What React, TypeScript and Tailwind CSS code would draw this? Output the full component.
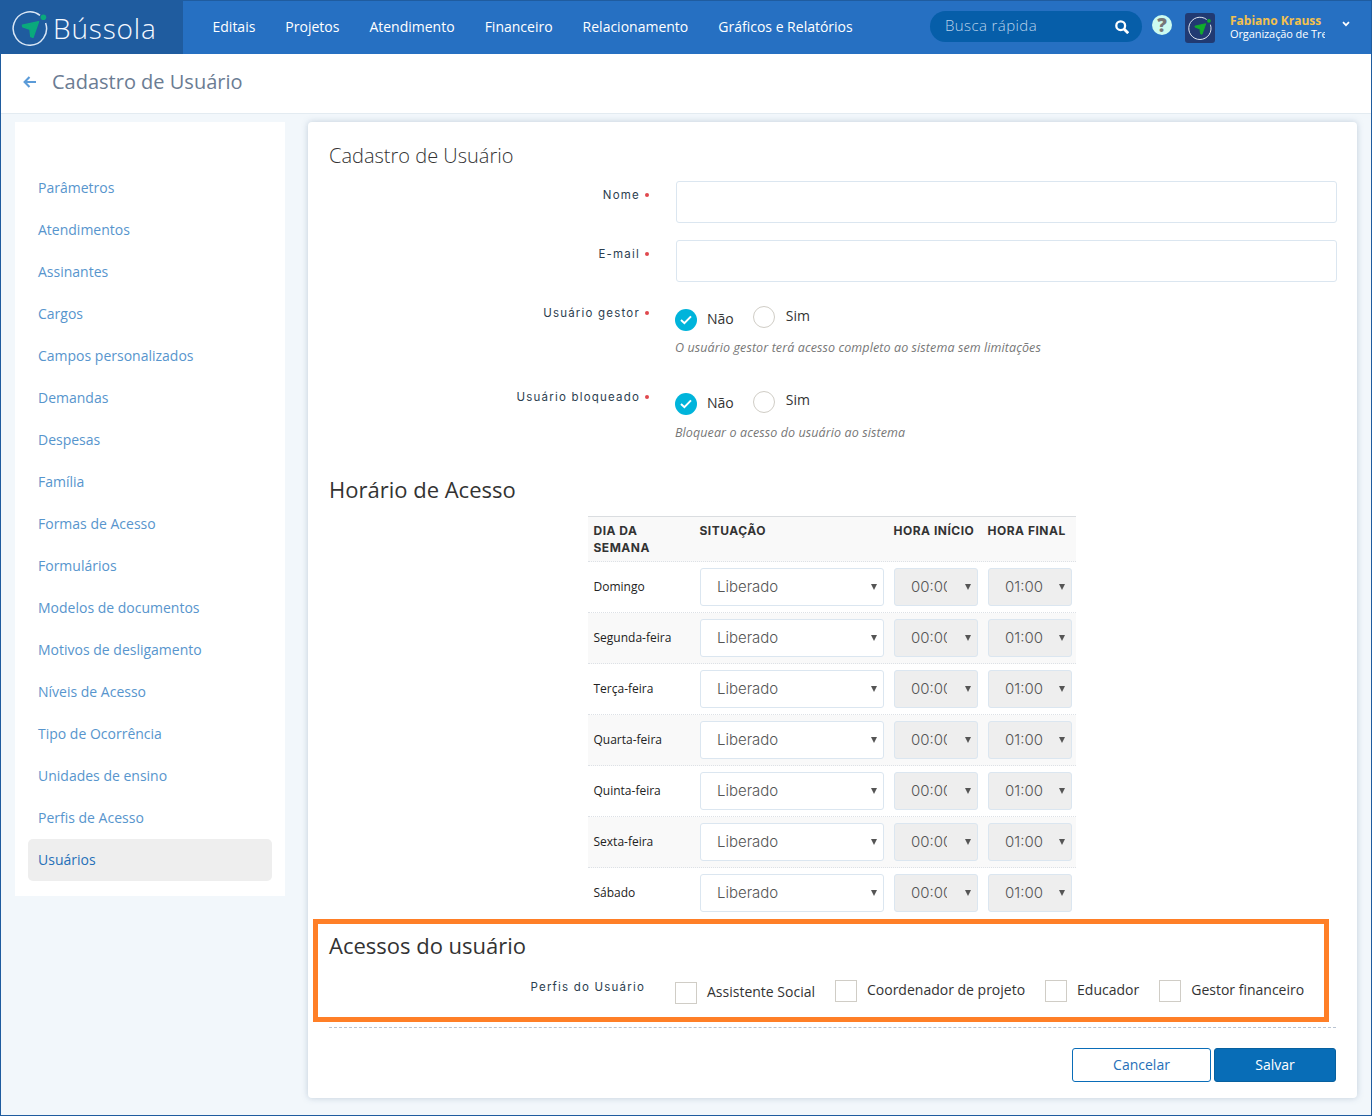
import React, { useState } from 'react';

const navItems = ['Editais', 'Projetos', 'Atendimento', 'Financeiro', 'Relacionamento', 'Gráficos e Relatórios'];

const menuItems = [
  'Parâmetros',
  'Atendimentos',
  'Assinantes',
  'Cargos',
  'Campos personalizados',
  'Demandas',
  'Despesas',
  'Família',
  'Formas de Acesso',
  'Formulários',
  'Modelos de documentos',
  'Motivos de desligamento',
  'Níveis de Acesso',
  'Tipo de Ocorrência',
  'Unidades de ensino',
  'Perfis de Acesso',
  'Usuários',
];

const days = ['Domingo', 'Segunda-feira', 'Terça-feira', 'Quarta-feira', 'Quinta-feira', 'Sexta-feira', 'Sábado'];

const CompassLogo: React.FC<{ className: string; arrow: string; ring: string }> = ({ className, arrow, ring }) => (
  <svg viewBox="0 0 36 36" className={className} fill="none">
    <path d="M28 5.3A16.7 16.7 0 1 0 33.6 13" stroke={ring} strokeWidth="1.5" />
    <circle cx="31.4" cy="7.2" r="2.8" fill={arrow} />
    <path d="M10.4 15.2 26.6 11.6 21 27.4 18.8 26.6 18 19.4 10.8 16.8Z" fill={arrow} stroke={arrow} strokeWidth="1.4" strokeLinejoin="round" />
  </svg>
);

const Header: React.FC = () => (
  <header className="flex h-[53px] bg-[#2670c2]">
    <div className="flex w-[182px] shrink-0 items-center bg-[#1f5c9f] pl-[11px]">
      <CompassLogo className="h-9 w-9 shrink-0" arrow="#0aaa7c" ring="#d9e6f5" />
      <span className="ml-[5px] text-[28px] leading-none font-light tracking-[0.85px] text-[#f3f8ff]">Bússola</span>
    </div>
    <nav className="flex items-center gap-[30px] pb-[2px] pl-[29.5px] text-[14px] text-white">
      {navItems.map((item) => (
        <a key={item} href="#" className="whitespace-nowrap">{item}</a>
      ))}
    </nav>
    <div className="ml-auto flex pr-[21px]">
      <div className="mt-[10px] flex h-[31px] w-[212px] items-center justify-between rounded-full bg-[#065ea9] pr-[13px] pl-[15px]">
        <span className="pb-[2px] text-[15px] font-light tracking-[0.4px] text-[#b9d2ea]">Busca rápida</span>
        <svg viewBox="0 0 14 14" className="h-[14px] w-[14px]" fill="none" stroke="white" strokeWidth="2.3">
          <circle cx="5.7" cy="5.7" r="4.4" />
          <path d="m9 9 4.2 4.2" strokeWidth="2.8" />
        </svg>
      </div>
      <div className="mt-[14px] ml-[10px] flex h-5 w-5 items-center justify-center rounded-full bg-[#ccfbf0] text-[19px] leading-none font-extrabold text-[#777]">?</div>
      <div className="mt-3 ml-[13px] flex h-[30px] w-[30px] items-center justify-center rounded-[3px] bg-[#213a72]">
        <CompassLogo className="h-6 w-6" arrow="#10ad2c" ring="#dde5f0" />
      </div>
      <div className="mt-3 ml-[15px] w-[95px] whitespace-nowrap">
        <div className="text-[12px] leading-[16px] font-bold text-[#f2c14e]">Fabiano Krauss</div>
        <div className="-mt-[3px] overflow-hidden text-[11px] leading-[15px] font-medium tracking-[-0.1px] text-white">Organização de Treinamento</div>
      </div>
      <svg viewBox="0 0 8 6" className="mt-5 ml-[17px] h-[6px] w-2" fill="none" stroke="white" strokeWidth="1.7">
        <path d="m1 1.2 3 3 3-3" />
      </svg>
    </div>
  </header>
);

const FormLabel: React.FC<{ text: string; required?: boolean }> = ({ text, required }) => (
  <div className="flex w-[322px] shrink-0 items-center justify-end self-start font-['Inter'] text-[11.5px] leading-[16px] tracking-[1.2px] text-[#2c3e50]">
    {text}
    {required ? <span className="mr-[2px] ml-[5px] h-1 w-1 rounded-full bg-[#e0484d]" /> : <span className="w-[6px]" />}
  </div>
);

const YesNo: React.FC<{ name: string; className?: string }> = ({ name, className = '' }) => {
  const [yes, setYes] = useState(false);

  const mark = (checked: boolean) =>
    checked ? (
      <span className="flex h-[22px] w-[22px] items-center justify-center rounded-full bg-[#00b4db]">
        <svg viewBox="0 0 12 10" className="h-[10px] w-3" fill="none" stroke="white" strokeWidth="2">
          <path d="m1 5 3.4 3.2L11 1.4" />
        </svg>
      </span>
    ) : (
      <span className="h-[22px] w-[22px] rounded-full border border-[#d0cdc6] bg-white" />
    );

  return (
    <div className={`flex text-[14px] leading-5 text-[#333] ${className}`} role="radiogroup" aria-label={name}>
      <button type="button" onClick={() => setYes(false)} className="mt-1 flex h-[22px] items-center gap-[10px]">
        {mark(!yes)}
        <span className="pb-[2px]">Não</span>
      </button>
      <button type="button" onClick={() => setYes(true)} className="mt-px ml-[19px] flex h-[22px] items-center gap-[11px]">
        {mark(yes)}
        <span className="pb-[2px]">Sim</span>
      </button>
    </div>
  );
};

const SelectBox: React.FC<{ value: string; className: string }> = ({ value, className }) => (
  <div className={`flex h-[38px] items-center rounded-[3px] border border-[#dbe6f0] pr-[6px] pl-4 font-['Inter'] text-[15px] font-light text-[#555] ${className}`}>
    <span className="mr-auto w-[36px] overflow-hidden whitespace-nowrap">{value}</span>
    <svg viewBox="0 0 7 7" className="h-[6px] w-[6px] shrink-0 fill-[#555]"><path d="M0 0h7L3.5 7Z" /></svg>
  </div>
);

const CheckOption: React.FC<{ label: string; className: string }> = ({ label, className }) => {
  const [checked, setChecked] = useState(false);
  return (
    <button type="button" onClick={() => setChecked(!checked)} className={`flex h-[22px] items-center gap-[10px] whitespace-nowrap ${className}`}>
      <span className={`h-[22px] w-[22px] border border-[#d0cdc6] ${checked ? 'bg-[#00b4db]' : 'bg-white'}`} />
      <span className="pb-[3px]">{label}</span>
    </button>
  );
};

const Schedule: React.FC = () => (
  <div className="ml-[259px] w-[488px]">
    <div className="grid h-[46px] grid-cols-[106px_194px_94px_94px] border-t border-b border-t-[#dadde0] border-b-[#dde1e6] bg-[#f9f9f9] pt-[5px] font-['Inter'] text-[12px] leading-[17px] font-bold tracking-[0.5px] text-[#333] [border-bottom-style:dotted]">
      <div className="w-[80px] pl-[5.5px]">DIA DA SEMANA</div>
      <div className="pl-[5.5px]">SITUAÇÃO</div>
      <div className="pl-[5.5px] whitespace-nowrap">HORA INÍCIO</div>
      <div className="pl-[5.5px] whitespace-nowrap">HORA FINAL</div>
    </div>
    {days.map((day, i) => (
      <div
        key={day}
        className={`grid h-[51px] grid-cols-[106px_194px_94px_94px] items-center border-b border-dotted ${i === 6 ? 'border-transparent' : 'border-[#dde1e6]'} ${i % 2 ? 'bg-[#f9f9f9]' : 'bg-white'}`}
      >
        <div className="pl-[5.5px] text-[12px] text-[#222]">{day}</div>
        <SelectBox value="Liberado" className="ml-[6px] w-[184px] bg-white [&>span]:w-[140px]" />
        <SelectBox value="00:00" className="ml-[6px] w-[84px] bg-[#eee]" />
        <SelectBox value="01:00" className="ml-[6px] w-[84px] bg-[#eee] [&>span]:w-[40px]" />
      </div>
    ))}
  </div>
);

const UserForm: React.FC = () => (
  <main className="ml-[23px] h-[976px] w-[1049px] rounded-[4px] bg-white pr-5 pl-[21px] shadow-[0_0_6px_rgba(100,130,160,0.35)]">
    <h2 className="pt-5 text-[20px] leading-[28px] font-light text-[#333]">Cadastro de Usuário</h2>

    <div className="mt-[11px] flex gap-[25px]">
      <div className="pt-[6px]"><FormLabel text="Nome" required /></div>
      <input type="text" className="h-[42px] w-[661px] rounded-[3px] border border-[#dbe6f0] px-4" />
    </div>
    <div className="mt-[17px] flex gap-[25px]">
      <div className="pt-[6px]"><FormLabel text="E-mail" required /></div>
      <input type="text" className="h-[42px] w-[661px] rounded-[3px] border border-[#dbe6f0] px-4" />
    </div>

    <div className="mt-[23px] flex gap-6">
      <FormLabel text="Usuário gestor" required />
      <div className="h-[84px]">
        <YesNo name="Usuário gestor" />
        <p className="mt-[7px] text-[12.5px] leading-5 tracking-[0.1px] text-[#777] italic">O usuário gestor terá acesso completo ao sistema sem limitações</p>
      </div>
    </div>
    <div className="flex gap-6">
      <FormLabel text="Usuário bloqueado" required />
      <div className="h-[84px]">
        <YesNo
          name="Usuário bloqueado"
          className="[&>button:last-child]:mt-[2px] [&>button:last-child>span:last-child]:pb-1"
        />
        <p className="mt-2 text-[12.5px] leading-5 tracking-[0.1px] text-[#777] italic">Bloquear o acesso do usuário ao sistema</p>
      </div>
    </div>

    <h2 className="mt-px pb-3 text-[22px] leading-[30px] text-[#333]">Horário de Acesso</h2>
    <Schedule />

    <section className="relative h-[108px]">
      <div className="pointer-events-none absolute top-0 -left-4 h-[103px] w-[1016px] border-5 border-[#ff7f27]" />
      <h2 className="pt-[11px] text-[22px] leading-[30px] text-[#333]">Acessos do usuário</h2>
      <div className="mt-[19px] flex gap-6">
        <FormLabel text="Perfis do Usuário" />
        <div className="flex text-[14px] leading-5 text-[#333]">
          <CheckOption label="Assistente Social" className="mt-[3px]" />
          <CheckOption label="Coordenador de projeto" className="mt-px ml-5" />
          <CheckOption label="Educador" className="mt-px ml-5" />
          <CheckOption label="Gestor financeiro" className="mt-px ml-5" />
        </div>
      </div>
    </section>

    <div className="flex w-[1007px] justify-end gap-[3px] border-t border-dashed border-[#b9c4d2] pt-5 text-[14px]">
      <button type="button" className="h-[34px] w-[139px] rounded-[3px] border border-[#0a6db8] pb-[2px] text-[#2670b8]">Cancelar</button>
      <button type="button" className="h-[34px] w-[122px] rounded-[3px] border border-[#07609f] bg-[#086db7] pb-[2px] font-medium text-white">Salvar</button>
    </div>
  </main>
);

const App: React.FC = () => (
  <div className="h-[1116px] w-[1372px] overflow-hidden border border-[#1f5c9f] bg-[#f2f7fb] font-['Open_Sans',sans-serif]">
    <Header />
    <div className="flex h-[60px] items-center border-b border-[#e3ebf1] bg-white pb-1 pl-[22px]">
      <svg viewBox="0 0 13 12" className="h-3 w-[13px]" fill="none" stroke="#5b9bd8" strokeWidth="2.1">
        <path d="M6.5 1 1.6 6l4.9 5M2 6h11" />
      </svg>
      <h1 className="ml-4 text-[20px] text-[#6b7c93]">Cadastro de Usuário</h1>
    </div>
    <div className="flex items-start pt-2 pl-[14px]">
      <aside className="h-[774px] w-[270px] bg-white px-[13px] pt-[45px]">
        {menuItems.map((item) => (
          <a
            key={item}
            href="#"
            className={`flex h-[42px] items-center rounded-[5px] pb-[2px] pl-[10px] text-[14px] ${item === 'Usuários' ? 'bg-[#eee] text-[#2670b8]' : 'text-[#5795cd]'}`}
          >
            {item}
          </a>
        ))}
      </aside>
      <UserForm />
    </div>
  </div>
);

export default App;
